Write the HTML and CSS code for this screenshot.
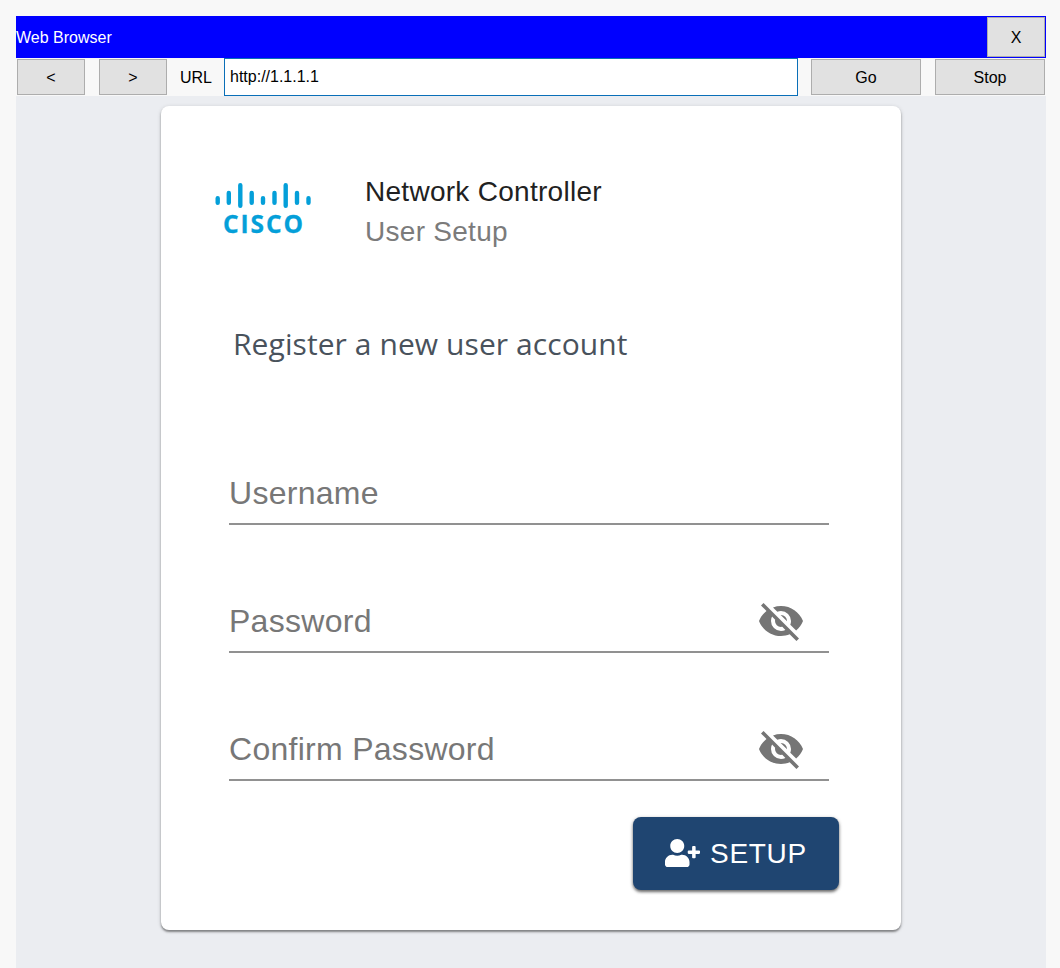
FILE: index.html
```html
<!DOCTYPE html>
<html lang="en">
<head>
<meta charset="utf-8">
<title>Web Browser</title>
<link rel="stylesheet" href="styles.css">
</head>
<body>
<div class="window">
  <header class="titlebar">
    <span class="window-title">Web Browser</span>
    <button class="btn close">X</button>
  </header>
  <nav class="toolbar">
    <button class="btn nav">&lt;</button>
    <button class="btn nav">&gt;</button>
    <span class="url-label">URL</span>
    <div class="url-box">http://1.1.1.1</div>
    <button class="btn action">Go</button>
    <button class="btn action">Stop</button>
  </nav>
  <main class="page">
    <section class="card">
      <div class="brand">
        <svg class="logo" width="98" height="62" viewBox="0 0 98 62">
          <g stroke="#049fd9" stroke-width="4.4" stroke-linecap="round">
            <path d="M2.700 17.200v4.600M13.800 11.900v9.900M25.300 4.200v20.600M36.700 11.900v9.900M48 17.200v4.600M59.500 11.900v9.900M70.700 4.200v20.600M82 11.900v9.900M93.500 17.200v4.600"/>
          </g>
          <text class="logo-text" x="8" y="52.400" textLength="80" lengthAdjust="spacing">CISCO</text>
        </svg>
        <div class="brand-text">
          <div class="product">Network Controller</div>
          <div class="subtitle">User Setup</div>
        </div>
      </div>
      <h1 class="heading">Register a new user account</h1>
      <form class="form">
        <div class="field"><span class="label">Username</span></div>
        <div class="field"><span class="label">Password</span>
          <svg class="eye" viewBox="0 0 24 24"><path d="M11.83 9L15 12.16V12a3 3 0 0 0-3-3h-.17M7.53 9.8l1.55 1.55C9.03 11.56 9 11.77 9 12a3 3 0 0 0 3 3c.22 0 .44-.03.65-.08l1.55 1.55c-.67.33-1.41.53-2.2.53a5 5 0 0 1-5-5c0-.79.2-1.53.53-2.2M2 4.27l2.28 2.28.45.45C3.08 8.3 1.78 10 1 12c1.73 4.39 6 7.5 11 7.5 1.55 0 3.03-.3 4.38-.84l.43.42L19.73 22 21 20.73 3.27 3M12 7a5 5 0 0 1 5 5c0 .64-.13 1.26-.36 1.82l2.93 2.93c1.5-1.25 2.7-2.89 3.43-4.75-1.73-4.39-6-7.5-11-7.5-1.4 0-2.74.25-4 .7l2.17 2.15C10.74 7.13 11.35 7 12 7z"/></svg>
        </div>
        <div class="field"><span class="label">Confirm Password</span>
          <svg class="eye" viewBox="0 0 24 24"><path d="M11.83 9L15 12.16V12a3 3 0 0 0-3-3h-.17M7.53 9.8l1.55 1.55C9.03 11.56 9 11.77 9 12a3 3 0 0 0 3 3c.22 0 .44-.03.65-.08l1.55 1.55c-.67.33-1.41.53-2.2.53a5 5 0 0 1-5-5c0-.79.2-1.53.53-2.2M2 4.27l2.28 2.28.45.45C3.08 8.3 1.78 10 1 12c1.73 4.39 6 7.5 11 7.5 1.55 0 3.03-.3 4.38-.84l.43.42L19.73 22 21 20.73 3.27 3M12 7a5 5 0 0 1 5 5c0 .64-.13 1.26-.36 1.82l2.93 2.93c1.5-1.25 2.7-2.89 3.43-4.75-1.73-4.39-6-7.5-11-7.5-1.4 0-2.74.25-4 .7l2.17 2.15C10.74 7.13 11.35 7 12 7z"/></svg>
        </div>
        <button type="button" class="setup">
          <svg class="user-plus" viewBox="0 0 640 512"><path d="M624 208h-64v-64c0-8.800-7.200-16-16-16h-32c-8.800 0-16 7.200-16 16v64h-64c-8.800 0-16 7.200-16 16v32c0 8.800 7.200 16 16 16h64v64c0 8.800 7.200 16 16 16h32c8.800 0 16-7.200 16-16v-64h64c8.800 0 16-7.200 16-16v-32c0-8.800-7.200-16-16-16zm-400 48c70.700 0 128-57.300 128-128S294.700 0 224 0 96 57.300 96 128s57.300 128 128 128zm89.600 32h-16.700c-22.200 10.200-46.900 16-73.600 16s-51.300-5.800-73.600-16h-16.700C60.200 288 0 348.200 0 422.400V464c0 26.500 21.500 48 48 48h352c26.500 0 48-21.500 48-48v-41.600c0-74.200-60.200-134.400-134.400-134.400z"/></svg>
          <span class="setup-label">SETUP</span>
        </button>
      </form>
    </section>
  </main>
</div>
</body>
</html>
```
FILE: styles.css
```css
* { box-sizing: border-box; }
body {
  margin: 0;
  height: 968px;
  overflow: hidden;
  background: #f8f8f8;
  font: 16px/20px "Liberation Sans", Arial, sans-serif;
  color: #000;
}
.window {
  width: 1030px;
  height: 968px;
  margin: 0 0 0 16px;
  padding-top: 16px;
  display: flex;
  flex-direction: column;
}
.titlebar {
  height: 42px;
  padding: 1px;
  padding-left: 0;
  background: #0000ff;
  color: #fff;
  display: flex;
  justify-content: space-between;
  align-items: center;
}
.window-title { padding-top: 2px; }
.btn {
  margin: 0;
  padding: 2px 0 0;
  border: 1px solid #adadad;
  border-radius: 0;
  background: #e1e1e1;
  color: #000;
  font: inherit;
}
.close { width: 58px; height: 40px; }
.toolbar {
  height: 38px;
  padding: 0 1px;
  display: flex;
  align-items: center;
}
.nav { width: 68px; height: 36px; margin-right: 14px; }
.url-label { width: 43px; margin-left: -1px; padding-top: 2px; }
.url-box {
  width: 574px;
  height: 38px;
  margin: 0 13px 0 1px;
  padding: 0 5px;
  border: 1px solid #0a6fb8;
  background: #fff;
  display: flex;
  align-items: center;
}
.action { width: 110px; height: 36px; }
.action + .action { margin-left: 14px; }
.page {
  flex: 1;
  background: #ebedf1;
  padding: 10px 145px 0;
}
.card {
  width: 740px;
  height: 824px;
  border-radius: 8px;
  background: #fff;
  box-shadow: 0 2px 2px rgba(0, 0, 0, .38), 0 1px 4px rgba(0, 0, 0, .16);
  padding: 66px 62px 0 54px;
}
.brand { display: flex; height: 80px; }
.logo { margin-top: 9px; margin-right: 52px; }
.logo-text {
  font: 700 24.5px "Open Sans", sans-serif;
  fill: #049fd9;
  stroke: #049fd9;
  stroke-width: .3px;
}
.brand-text {
  font-size: 28px;
  line-height: 40px;
  letter-spacing: .28px;
  white-space: nowrap;
}
.product { color: #212121; }
.subtitle { color: #7b7b7b; }
.heading {
  margin: 70px 0 0 18px;
  font: 400 30px/44px "Open Sans", "Noto Sans", sans-serif;
  letter-spacing: .08px;
  color: #49525c;
  white-space: nowrap;
}
.form {
  width: 624px;
  padding-top: 31px;
  display: flex;
  flex-direction: column;
}
.field {
  width: 600px;
  height: 128px;
  margin-left: 14px;
  padding: 0 24px 6px 0;
  border-bottom: 2px solid #919191;
  display: flex;
  align-items: flex-end;
  justify-content: space-between;
}
.label {
  font-size: 32px;
  line-height: 48px;
  letter-spacing: .28px;
  color: #777;
}
.eye { width: 48px; height: 48px; fill: #757575; }
.setup {
  align-self: flex-end;
  width: 206px;
  height: 73px;
  margin-top: 36px;
  padding: 0 0 1px 32px;
  border: 0;
  border-radius: 8px;
  background: #1f4571;
  color: #fff;
  box-shadow: 0 2px 3px rgba(0, 0, 0, .5), 0 1px 4px rgba(0, 0, 0, .2);
  display: flex;
  align-items: center;
  font: 28px/40px "Liberation Sans", Arial, sans-serif;
  letter-spacing: .7px;
}
.setup-label { padding-top: 2px; }
.user-plus { width: 35px; height: 28px; fill: #fff; margin-right: 10px; }
```
